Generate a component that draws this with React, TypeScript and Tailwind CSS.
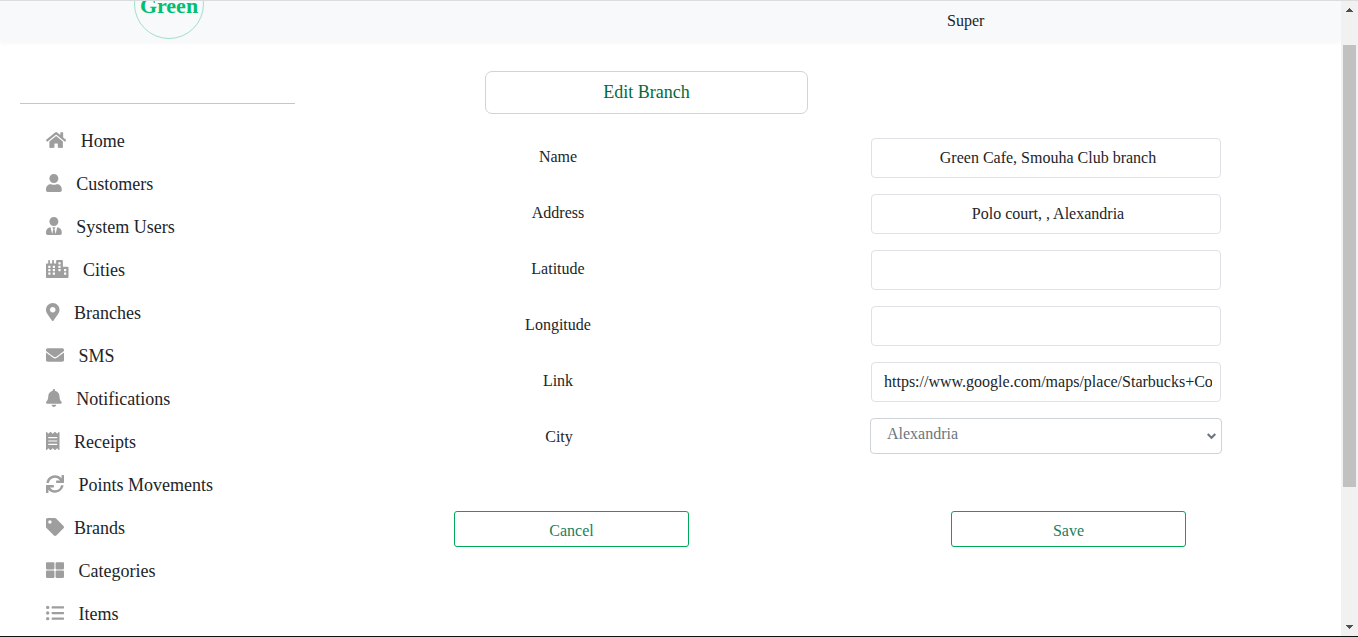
import type { IconType } from "react-icons";
import {
  FaBell,
  FaCity,
  FaEnvelope,
  FaHome,
  FaListUl,
  FaMapMarkerAlt,
  FaReceipt,
  FaSync,
  FaTag,
  FaThLarge,
  FaUser,
  FaUserTie,
} from "react-icons/fa";

type NavItem = { label: string; icon: IconType; iconClass: string };

const navItems: NavItem[] = [
  { label: "Home", icon: FaHome, iconClass: "w-[20.25px] mr-[14.5px]" },
  { label: "Customers", icon: FaUser, iconClass: "w-[15.75px] mr-[14.5px]" },
  { label: "System Users", icon: FaUserTie, iconClass: "w-[15.75px] mr-[14.5px]" },
  { label: "Cities", icon: FaCity, iconClass: "w-[22.5px] mr-[14.5px]" },
  { label: "Branches", icon: FaMapMarkerAlt, iconClass: "w-[13.5px] mr-[14.5px]" },
  { label: "SMS", icon: FaEnvelope, iconClass: "w-[18px] mr-[14.5px]" },
  { label: "Notifications", icon: FaBell, iconClass: "w-[15.75px] mr-[14.5px]" },
  { label: "Receipts", icon: FaReceipt, iconClass: "w-[13.5px] mr-[14.5px]" },
  { label: "Points Movements", icon: FaSync, iconClass: "w-[18px] mr-[14.5px]" },
  { label: "Brands", icon: FaTag, iconClass: "w-[18px] mr-[10px]" },
  { label: "Categories", icon: FaThLarge, iconClass: "w-[18px] mr-[14.5px]" },
  { label: "Items", icon: FaListUl, iconClass: "w-[18px] mr-[14.5px]" },
];

const fields = [
  { label: "Name", value: "Green Cafe, Smouha Club branch" },
  { label: "Address", value: "Polo court, , Alexandria" },
  { label: "Latitude", value: "" },
  { label: "Longitude", value: "" },
  { label: "Link", value: "https://www.google.com/maps/place/Starbucks+Coffee" },
];

function Header() {
  return (
    <header className="flex h-10 shrink-0 items-start bg-[#f8f9fa] shadow-[0_2px_4px_rgba(0,0,0,0.04)]">
      <div className="-mt-8 ml-[134px] flex size-[70px] shrink-0 items-center justify-center rounded-full border border-[#a3dfc8]">
        <span className="mt-[3px] text-[22px] leading-none font-bold text-[#00bf70]">Green</span>
      </div>
      <span className="ml-[743px] pt-2 text-base leading-6 text-[#212529]">Super</span>
    </header>
  );
}

function Sidebar() {
  return (
    <nav className="ml-5 w-[275px] shrink-0 pt-[62px]">
      <div className="h-px bg-[#c6c6c6]" />
      <ul className="pt-[15px] pl-[26px]">
        {navItems.map(({ label, icon: Icon, iconClass }) => (
          <li key={label} className="flex h-[43px] items-center text-lg text-[#212529]">
            <Icon className={`mb-px h-[18px] shrink-0 text-[#9e9e9e] ${iconClass}`} />
            <span className="mt-px whitespace-nowrap">{label}</span>
          </li>
        ))}
      </ul>
    </nav>
  );
}

function BranchForm() {
  return (
    <main className="flex-1 pt-[30px]">
      <h1 className="ml-[190px] flex h-[43px] w-[323px] items-center justify-center rounded-[7px] border border-[#ced4da] pb-0.5 text-lg text-[#006b3c]">
        Edit Branch
      </h1>
      <div className="mt-6 flex flex-col gap-4 pl-[163px]">
        {fields.map(({ label, value }) => (
          <div key={label} className="flex h-10">
            <label className="w-[200px] pt-[7px] text-center text-base leading-6 text-[#212529]">{label}</label>
            <input
              readOnly
              aria-label={label}
              value={value}
              className="ml-[213px] h-10 w-[350px] rounded border border-[#dee2e6] pr-2 pl-3 text-center text-base text-[#212529] outline-none"
            />
          </div>
        ))}
        <div className="flex h-9">
          <label className="w-[202px] pt-[7px] text-center text-base leading-6 text-[#212529]">City</label>
          <div className="ml-[210px] flex h-9 w-[352px] justify-between rounded border border-[#ced4da] pr-[5px] pl-4 text-base text-[#6c757d]">
            <span className="pt-[3px] leading-6">Alexandria</span>
            <svg className="mt-[13.5px] h-[7px] w-[9px]" viewBox="0 0 9 7" fill="none" stroke="#6c757d" strokeWidth="2">
              <path d="M.7 1 4.5 4.8 8.3 1" />
            </svg>
          </div>
        </div>
      </div>
      <div className="mt-[57px] flex gap-[262px] pl-[159px]">
        {["Cancel", "Save"].map((action) => (
          <button
            key={action}
            className="h-9 w-[235px] rounded-[3px] border border-[#00a859] pt-[3px] text-base text-[#1a8060]"
          >
            {action}
          </button>
        ))}
      </div>
    </main>
  );
}

function Scrollbar() {
  return (
    <div className="flex w-[17px] shrink-0 flex-col items-center bg-[#f1f1f1]">
      <svg className="mt-[7px] h-1 w-[7px] shrink-0" viewBox="0 0 7 4" shapeRendering="crispEdges" fill="#505050">
        <path d="M3 0h1v1h1v1h1v1h1v1H0V3h1V2h1V1h1z" />
      </svg>
      <div className="mt-[33px] h-[442px] w-[13px] shrink-0 bg-[#c1c1c1]" />
      <svg className="mt-[138px] h-1 w-[7px] shrink-0" viewBox="0 0 7 4" shapeRendering="crispEdges" fill="#505050">
        <path d="M0 0h7v1H6v1H5v1H4v1H3V3H2V2H1V1H0z" />
      </svg>
    </div>
  );
}

export default function App() {
  return (
    <div className="flex h-[637px] w-full overflow-hidden border-t border-b border-t-[#dadce0] border-b-[#111] bg-white [font-family:'Liberation_Serif',serif]">
      <div className="flex min-w-0 flex-1 flex-col overflow-hidden">
        <Header />
        <div className="flex min-h-0 flex-1">
          <Sidebar />
          <BranchForm />
        </div>
      </div>
      <Scrollbar />
    </div>
  );
}
